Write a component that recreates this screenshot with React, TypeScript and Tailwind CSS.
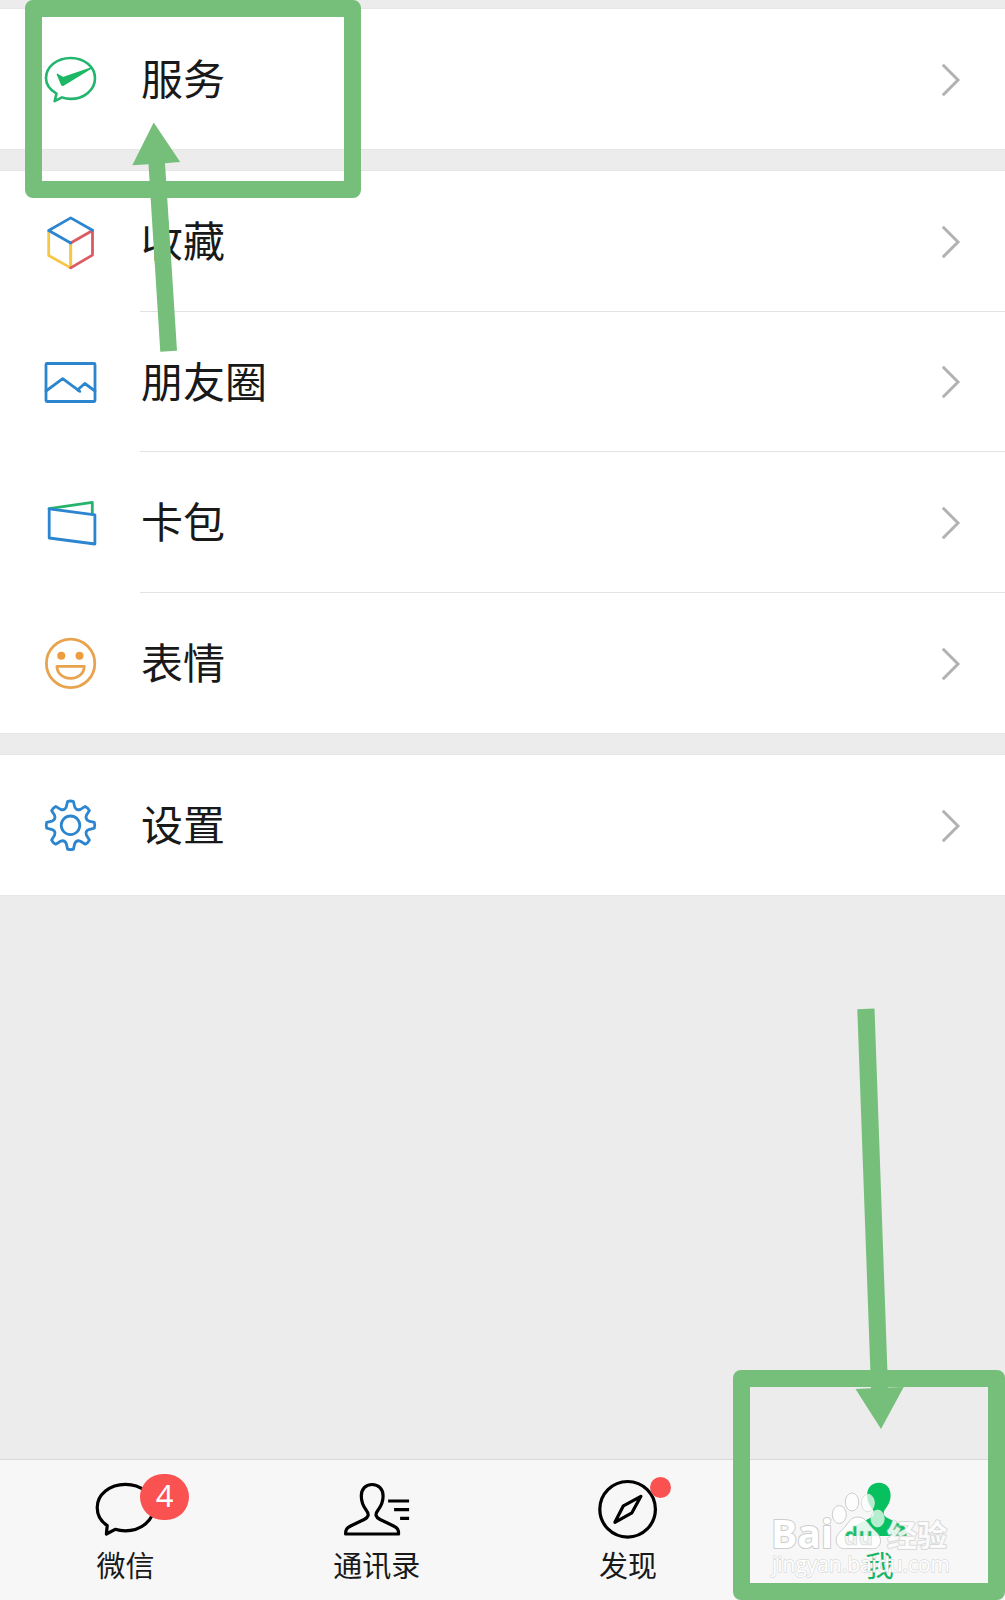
import type { ReactNode } from "react";

const BLUE = "#2c86cf";

// eight-tooth outline around (0, 0)
const gearPath = (() => {
  const at = (deg: number, r: number) => {
    const a = (deg * Math.PI) / 180;
    return `${(r * Math.sin(a)).toFixed(2)} ${(-r * Math.cos(a)).toFixed(2)}`;
  };
  let d = "";
  for (let i = 0; i < 8; i++) {
    const t = i * 45;
    d += `${i === 0 ? "M" : "L"}${at(t - 7, 24)} Q${at(t, 24.8)} ${at(t + 7, 24)} L${at(t + 13, 18.8)} Q${at(t + 22.5, 15.6)} ${at(t + 32, 18.8)} `;
  }
  return d + "Z";
})();

function RowIcon({ top, children }: { top: number; children: ReactNode }) {
  return (
    <svg
      className="h-[60px] w-[60px] shrink-0"
      viewBox={`40 ${top} 60 60`}
      fill="none"
      strokeWidth="2.8"
      strokeLinejoin="round"
      strokeLinecap="round"
    >
      {children}
    </svg>
  );
}

const ServiceIcon = () => (
  <RowIcon top={49}>
    <path d="M56.5 93.6 C49.8 89.8 46 84.6 46 78.3 C46 66.8 57 58 70.6 58 C84.2 58 95 66.8 95 78.3 C95 89.8 84.2 98.9 70.6 98.9 C67.6 98.9 64.8 98.4 62 97.4 L54.6 101.2 Z" stroke="#22b56d" strokeWidth="2.6" />
    <path d="M57.3 74.3 L63 77.6 L91.5 68 L63.3 85.2 L61.8 85 Z" fill="#1db865" stroke="#1db865" strokeWidth="1.4" />
  </RowIcon>
);

const FavoriteIcon = () => (
  <RowIcon top={211.5}>
    <path d="M48.7 230.5 V255 L70.7 267.4 V242.5" stroke="#f5c748" />
    <path d="M70.7 267.4 L92.5 254.6 V230 L70.7 242.5" stroke="#dc5b62" />
    <path d="M70.7 264 V244" stroke="#f5c748" />
    <path d="M92.5 229.8 L70.7 217.4 L48.7 230 L70.7 242.5" stroke={BLUE} />
  </RowIcon>
);

const MomentsIcon = () => (
  <RowIcon top={352}>
    <rect x="46" y="363.5" width="49" height="38" rx="1" stroke={BLUE} />
    <path d="M46 391 L62.7 378.7 L79.8 391.3 L77.5 390 L84.8 383.5 L95 391" stroke={BLUE} />
  </RowIcon>
);

const CardIcon = () => (
  <RowIcon top={493}>
    <path d="M49 508.6 L92.3 502.4 V513.5" stroke="#27b36c" />
    <path d="M49.2 508.8 L94.9 514.8 V544 L49.2 538 Z" stroke={BLUE} />
  </RowIcon>
);

const StickerIcon = () => (
  <RowIcon top={633}>
    <circle cx="70.6" cy="663.4" r="24.2" stroke="#e8a34f" />
    <circle cx="61.3" cy="655.8" r="4" fill="#ed9c40" />
    <circle cx="79.5" cy="655.8" r="4" fill="#ed9c40" />
    <path d="M56.9 666.3 H84.3 C83.9 673.5 78.5 678.4 70.6 678.4 C62.7 678.4 57.3 673.5 56.9 666.3 Z" stroke="#e8a34f" />
  </RowIcon>
);

const SettingsIcon = () => (
  <RowIcon top={795}>
    <g transform="translate(70.5 825.3)" stroke={BLUE}>
      <path d={gearPath} />
      <circle r="9.3" />
    </g>
  </RowIcon>
);

type Item = { label: string; icon: ReactNode; height: string; line?: boolean };

const groups: Item[][] = [
  [{ label: "服务", icon: <ServiceIcon />, height: "h-[140px]" }],
  [
    { label: "收藏", icon: <FavoriteIcon />, height: "h-[141px]", line: true },
    { label: "朋友圈", icon: <MomentsIcon />, height: "h-[140px]", line: true },
    { label: "卡包", icon: <CardIcon />, height: "h-[141px]", line: true },
    { label: "表情", icon: <StickerIcon />, height: "h-[140px]" },
  ],
  [{ label: "设置", icon: <SettingsIcon />, height: "h-[140px]" }],
];

function Row({ label, icon, height, line }: Item) {
  return (
    <div className={`flex items-center pl-10 ${height}`}>
      {icon}
      <div className={`ml-10 flex h-full flex-1 items-center justify-between pr-[43px] ${line ? "border-b border-[#e3e3e3]" : ""}`}>
        <span className="pb-1 pl-px text-[42px] leading-none text-[#191919]">{label}</span>
        <svg className="mt-px h-9 w-[22px]" viewBox="0 0 22 36" fill="none" stroke="#b2b2b2" strokeWidth="3">
          <path d="M2.800 2.800 L18 18 L2.800 33.200" />
        </svg>
      </div>
    </div>
  );
}

function Tab({ label, x, active, children }: { label: string; x: number; active?: boolean; children: ReactNode }) {
  return (
    <div className="relative flex flex-1 flex-col items-center pt-[19px]">
      <svg
        className="h-[60px] w-[80px]"
        viewBox={`${x - 40} 1479 80 60`}
        fill="none"
        stroke="#000"
        strokeWidth="3.2"
        strokeLinejoin="round"
      >
        {children}
      </svg>
      <span className={`mt-[11px] text-[29px] leading-[29px] ${active ? "text-[#12b565]" : "text-[#191919]"}`}>{label}</span>
      {label === "微信" && (
        <span className="absolute left-[140px] top-[14px] flex h-[46px] w-[49px] items-center justify-center rounded-full bg-[#fa5151] pb-[3px] font-['Noto_Sans',sans-serif] text-[31px] leading-none text-white">
          4
        </span>
      )}
      {label === "发现" && <span className="absolute left-[147px] top-[17px] h-[21px] w-[21px] rounded-full bg-[#fa5151]" />}
    </div>
  );
}

function Watermark() {
  return (
    <svg className="absolute left-[765px] top-[1485px] h-[100px] w-[200px]" viewBox="765 1485 200 100">
      <defs>
        <linearGradient id="du" gradientUnits="userSpaceOnUse" x1="0" y1="1520" x2="0" y2="1552">
          <stop offset="0.49" stopColor="#12c065" />
          <stop offset="0.49" stopColor="#f3f3f3" />
        </linearGradient>
      </defs>
      <g fill="#fff" stroke="#cdcdcd" strokeWidth="1">
        <g fillOpacity="0.7">
          <ellipse cx="839.3" cy="1514.5" rx="7" ry="9" />
          <ellipse cx="852" cy="1502" rx="6.7" ry="9" />
          <ellipse cx="867.8" cy="1503" rx="6.5" ry="8.8" stroke="#d3e6da" />
          <ellipse cx="877.6" cy="1518.5" rx="6.6" ry="8.4" stroke="#c5ead3" />
        </g>
        <path
          fillOpacity="0.88"
          d="M858 1517 C866 1517 868 1525 874 1530 C880 1535 882 1540 879.5 1545 C877.5 1549 873 1549 868 1548.5 H848 C842 1549.5 837.5 1547.5 836.3 1542 C835 1535 841 1531 845 1527 C849 1522 851 1517 858 1517 Z"
        />
        <g paintOrder="stroke" strokeWidth="2" strokeLinejoin="round">
          <text x="771" y="1548" fontSize="39" fontWeight="700" textLength="62" lengthAdjust="spacingAndGlyphs" fontFamily="Open Sans, sans-serif">
            Bai
          </text>
          <text x="887" y="1545.5" fontSize="30" fontWeight="700" textLength="60" fillOpacity="0.85" strokeOpacity="0.7">
            经验
          </text>
          <text
            x="772"
            y="1571.500"
            fontSize="21"
            textLength="178"
            lengthAdjust="spacingAndGlyphs"
            fontFamily="Open Sans, sans-serif"
            strokeWidth="1.400"
            strokeOpacity="0.700"
          >
            jingyan.baidu.com
          </text>
        </g>
      </g>
      <text
        x="844"
        y="1545"
        fontSize="25"
        fontWeight="700"
        fill="url(#du)"
        stroke="#cfd8d2"
        strokeWidth="0.700"
        textLength="29"
        lengthAdjust="spacingAndGlyphs"
        fontFamily="Open Sans, sans-serif"
      >
        du
      </text>
    </svg>
  );
}

export default function App() {
  return (
    <main className="relative flex h-[1600px] w-[1005px] flex-col overflow-hidden bg-[#ececec] font-['Noto_Sans_CJK_SC',sans-serif]">
      <div className="flex flex-col gap-[22px] pt-[9px]">
        {groups.map((items, i) => (
          <section key={i} className="bg-white shadow-[0_0_0_1px_#e6e6e6]">
            {items.map((item) => (
              <Row key={item.label} {...item} />
            ))}
          </section>
        ))}
      </div>

      <nav className="mt-auto flex h-[141px] border-t border-[#d9d9d9] bg-[#f7f7f7]">
        <Tab label="微信" x={125.6}>
          <path d="M106.8 1525.6 C100.5 1521.4 96.8 1514.8 96.8 1507.5 C96.8 1494.5 109.400 1484.300 125 1484.300 C140.600 1484.300 153.200 1494.500 153.200 1507.500 C153.200 1520.500 140.600 1530.800 125 1530.800 C121.400 1530.800 118 1530.300 114.800 1529.300 L106 1534 Z" />
        </Tab>
        <Tab label="通讯录" x={376.9}>
          <path d="M372 1484.5 C378.5 1484.5 383 1489 383 1496 C383 1502 381 1506 378 1510 C374.5 1514.5 375.5 1517 380 1519.5 L393.5 1526 C397.5 1528 398.5 1529.5 398.500 1534 H345.500 C345.500 1529.500 346.500 1528 350.500 1526 L364 1519.500 C368.500 1517 369.500 1514.500 366 1510 C363 1506 361.200 1502 361.200 1496 C361.200 1489 365.500 1484.500 372 1484.500 Z" />
          <path d="M388 1501 H409 M394 1509.700 H409 M400 1518.300 H409" />
        </Tab>
        <Tab label="发现" x={628.1}>
          <circle cx="627.700" cy="1509.300" r="27.800" />
          <path d="M641 1496.300 L632 1512.800 L615 1522.300 L623.500 1505.800 Z" />
        </Tab>
        <Tab label="我" x={879.4} active>
          <path
            d="M879.300 1482.700 C886.500 1482.700 891 1488 891 1495 C891 1502 888 1506 885 1510 C883.500 1513 884 1515.500 887 1517.500 L902 1525 C906 1527 907 1529 907 1536 H852 C852 1529 852.700 1527 856.500 1525 L871.500 1517.500 C874.500 1515.500 875 1513 873.500 1510 C870.500 1506 867.500 1502 867.500 1495 C867.500 1488 872 1482.700 879.300 1482.700 Z"
            fill="#07c160"
            stroke="none"
          />
        </Tab>
      </nav>

      <Watermark />

      {/* highlight boxes and arrows */}
      <div className="absolute left-[25px] top-0 h-[198px] w-[336px] rounded-lg border-[17px] border-[#76bf7a]" />
      <div className="absolute left-[733px] top-[1370px] h-[230px] w-[272px] rounded-lg border-[17px] border-[#76bf7a]" />
      <svg className="absolute inset-0 h-full w-full" viewBox="0 0 1005 1600" fill="#76bf7a">
        <path d="M153.700 122.500 L180.200 162 L165 163.200 L177 350.700 L160.300 351.700 L148.500 164.300 L132.300 165.300 Z" />
        <path d="M857.300 1009.300 L874.500 1008.500 L888 1387.500 L903.700 1387 L881 1429 L855.500 1389 L871 1388.300 Z" />
      </svg>
    </main>
  );
}
